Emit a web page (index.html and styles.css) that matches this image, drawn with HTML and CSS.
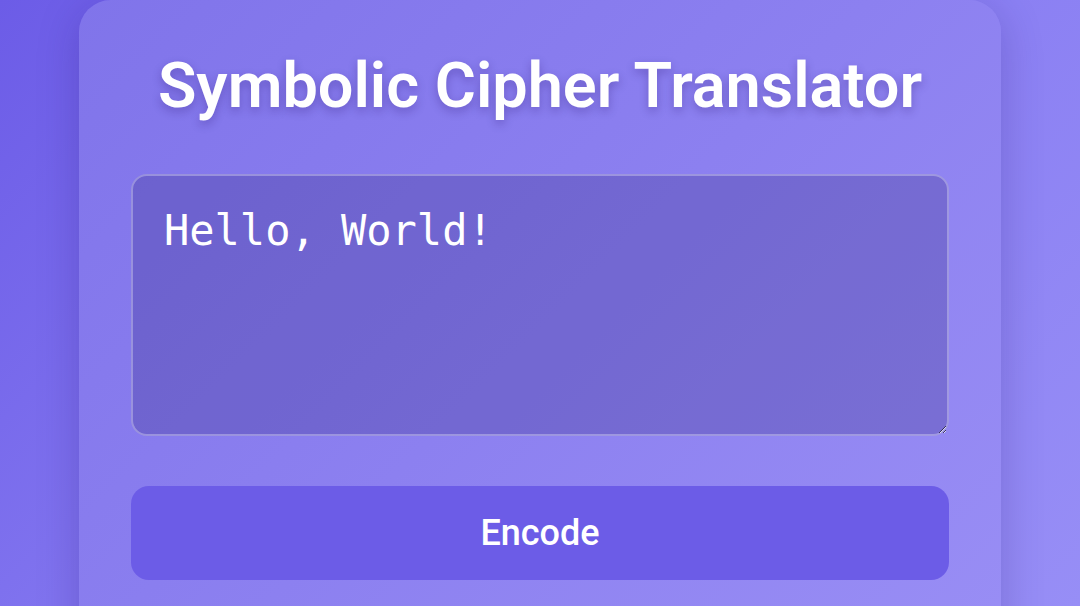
FILE: index.html
```html
<!DOCTYPE html>
<html>
<head>
<meta charset="utf-8">
<link rel="stylesheet" href="styles.css">
</head>
<body>
<main class="card">
  <h1 class="title">Symbolic Cipher Translator</h1>
  <textarea class="input" spellcheck="false">Hello, World!</textarea>
  <button class="btn">Encode</button>
</main>
</body>
</html>
```
FILE: styles.css
```css
html, body {
  margin: 0;
  padding: 0;
  height: 100%;
  overflow: hidden;
}
body {
  background: linear-gradient(135deg, #6c5ce7 0%, #8b80f3 60%, #978ef6 100%);
  font-family: Roboto, "Liberation Sans", sans-serif;
}
.card {
  width: 922px;
  box-sizing: border-box;
  margin: 0 auto;
  min-height: 660px;
  padding: 48px 52px;
  border-radius: 32px;
  background: linear-gradient(135deg, #8074ea 0%, #8c80f0 50%, #998ef5 100%);
  box-shadow: 0 10px 40px rgba(40, 20, 120, 0.25);
  display: flex;
  flex-direction: column;
}
.title {
  margin: 0 0 51px;
  text-align: center;
  color: #fff;
  font-size: 63px;
  font-weight: 600;
  line-height: 75px;
  text-shadow: 0 4px 10px rgba(40, 20, 110, 0.3);
}
.input {
  display: block;
  box-sizing: border-box;
  height: 262px;
  margin: 0 0 50px;
  padding: 28px 31px;
  border: 2px solid rgba(255, 255, 255, 0.3);
  border-radius: 16px;
  background: rgba(40, 30, 120, 0.25);
  color: #fff;
  font-family: "DejaVu Sans Mono", monospace;
  font-size: 42px;
  line-height: 1.3;
  outline: none;
}
.btn {
  height: 94px;
  border: none;
  border-radius: 18px;
  background: #6c5ce7;
  color: #fff;
  font-family: Roboto, "Liberation Sans", sans-serif;
  font-size: 36px;
  font-weight: 500;
}
```
